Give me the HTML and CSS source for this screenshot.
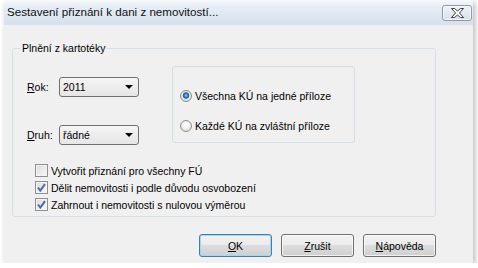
FILE: index.html
```html
<!DOCTYPE html>
<html lang="cs">

<head>
  <meta charset="utf-8">
  <title>Sestavení přiznání k dani z nemovitostí</title>
  <link rel="stylesheet" href="styles.css">
</head>

<body>
  <div class="window">
    <div class="titlebar">
      <span class="title">Sestavení přiznání k dani z nemovitostí...</span>
      <button class="close">
        <svg width="13" height="10" viewBox="0 0 13 10">
          <polygon points="0.5,0.5 3.5,0.5 6.5,3 9.5,0.5 12.5,0.5 8.5,5 12.5,9.5 9.5,9.5 6.5,7 3.5,9.5 0.5,9.5 4.5,5"
            fill="#fff" stroke="#3b3b3b" stroke-width="1" stroke-linejoin="round" />
        </svg>
      </button>
    </div>

    <div class="content">
      <div class="group">
        <span class="group-title">Plnění z kartotéky</span>

        <div class="group-top">
          <div class="fields">
            <div class="field">
              <label><u>R</u>ok:</label>
              <div class="combo"><span>2011</span><i class="arrow"></i></div>
            </div>
            <div class="field">
              <label><u>D</u>ruh:</label>
              <div class="combo"><span>řádné</span><i class="arrow"></i></div>
            </div>
          </div>

          <div class="radio-box">
            <div class="option"><span class="radio checked"></span>Všechna KÚ na jedné příloze</div>
            <div class="option"><span class="radio"></span>Každé KÚ na zvláštní příloze</div>
          </div>
        </div>

        <div class="checks">
          <div class="check-row"><span class="checkbox"></span>Vytvořit přiznání pro všechny FÚ</div>
          <div class="check-row"><span class="checkbox checked"></span>Dělit nemovitosti i podle důvodu osvobození</div>
          <div class="check-row"><span class="checkbox checked"></span>Zahrnout i nemovitosti s nulovou výměrou</div>
        </div>
      </div>

      <div class="buttons">
        <button class="btn default"><u>O</u>K</button>
        <button class="btn"><u>Z</u>rušit</button>
        <button class="btn"><u>N</u>ápověda</button>
      </div>
    </div>
  </div>
</body>

</html>
```

FILE: styles.css
```css
body {
  margin: 0;
  background: #fff;
  font-family: "Liberation Sans", Arial, sans-serif;
  font-size: 10.5px;
  color: #000;
}

.window {
  margin-left: 4px;
  width: 469px;
  height: 263px;
  background: #f0f0f0;
  box-shadow: 2px 2px 6px rgba(0, 0, 0, 0.28);
}

.titlebar {
  height: 25px;
  display: flex;
  justify-content: space-between;
  align-items: flex-start;
  padding-left: 3px;
  background: linear-gradient(#f8fafc 0, #e6edf5 25%, #d6e1ee 100%);
}

.title {
  font-size: 11.6px;
  line-height: 24px;
  color: #111;
}

.close {
  margin: 5px 1px 0 0;
  width: 30px;
  height: 16px;
  padding: 0;
  display: flex;
  align-items: center;
  justify-content: center;
  border: 1px solid #8c9aab;
  border-radius: 3px;
  background: linear-gradient(#eef2f7, #d9e1eb);
  box-shadow: inset 0 0 0 1px rgba(255, 255, 255, 0.6);
}

.content {
  padding-top: 23px;
}

.group {
  position: relative;
  margin-left: 8px;
  width: 424px;
  height: 169px;
  box-sizing: border-box;
  border: 1px solid #d5dfe5;
  border-radius: 3px;
  padding: 17px 0 0 14px;
}

.group-title {
  position: absolute;
  top: -7px;
  left: 7px;
  padding: 0 2px;
  line-height: 13px;
  background: #f0f0f0;
}

.group-top {
  display: flex;
  align-items: flex-start;
}

.fields {
  margin-top: 11px;
  display: flex;
  flex-direction: column;
  gap: 28px;
}

.field {
  display: flex;
  align-items: center;
}

.field label {
  width: 32px;
}

.combo {
  width: 80px;
  height: 20px;
  box-sizing: border-box;
  border: 1px solid #707070;
  border-radius: 3px;
  background: linear-gradient(#f4f4f4, #e6e6e6);
  display: flex;
  align-items: center;
  justify-content: space-between;
  padding: 0 5px 0 3px;
}

.arrow {
  width: 0;
  height: 0;
  border-top: 4px solid #000;
  border-left: 4px solid transparent;
  border-right: 4px solid transparent;
}

.radio-box {
  margin-left: 33px;
  width: 183px;
  height: 77px;
  box-sizing: border-box;
  border: 1px solid #d5dfe5;
  border-radius: 3px;
  padding: 22px 0 0 7px;
  display: flex;
  flex-direction: column;
  gap: 17px;
}

.option {
  display: flex;
  align-items: center;
  gap: 3px;
  height: 13px;
}

.radio {
  width: 12px;
  height: 12px;
  box-sizing: border-box;
  border-radius: 50%;
  border: 1px solid #8e8f8f;
  background: radial-gradient(circle at 50% 40%, #fdfdfd 20%, #d8d8d8 90%);
}

.radio.checked {
  background: radial-gradient(circle at 50% 45%, #93d3f5 0, #2d8fd6 1.5px, #1a5aa0 2.8px, #e8e8e8 3.6px, #d6d6d6 90%);
}

.checks {
  margin: 17px 0 0 8px;
}

.check-row {
  display: flex;
  align-items: center;
  gap: 3px;
  height: 17px;
}

.checkbox {
  width: 13px;
  height: 13px;
  box-sizing: border-box;
  border: 1px solid #8e8f8f;
  background: linear-gradient(135deg, #dcdcdc, #f8f8f8);
  box-shadow: inset 0 0 0 1px #f4f4f4;
}

.checkbox.checked {
  background:
    url("data:image/svg+xml;utf8,<svg xmlns='http://www.w3.org/2000/svg' width='11' height='11'><path d='M2 5.5 L4.3 8.5 L9 2.2' fill='none' stroke='%234a6ba4' stroke-width='2'/></svg>") center no-repeat,
    linear-gradient(135deg, #dcdcdc, #f8f8f8);
}

.buttons {
  margin: 17px 0 0 8px;
  width: 424px;
  display: flex;
  justify-content: flex-end;
  gap: 9px;
}

.btn {
  width: 73px;
  height: 23px;
  padding: 0;
  font-family: inherit;
  font-size: 10.5px;
  color: #000;
  border: 1px solid #707070;
  border-radius: 3px;
  background: linear-gradient(#f2f2f2 0%, #ebebeb 49%, #dddddd 50%, #cfcfcf 100%);
  box-shadow: inset 0 0 0 1px rgba(255, 255, 255, 0.7);
}

.btn.default {
  border-color: #3c7fb1;
  box-shadow: inset 0 0 0 1px #9fd8f7;
}
```
